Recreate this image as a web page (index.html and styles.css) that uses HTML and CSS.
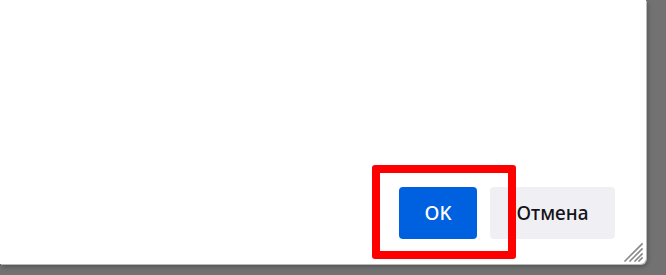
FILE: index.html
```html
<!DOCTYPE html>
<html lang="ru">
<head>
<meta charset="utf-8">
<title>Dialog</title>
<link rel="stylesheet" href="styles.css">
</head>
<body>
<div class="dialog">
  <div class="dialog-body"></div>
  <div class="dialog-footer">
    <div class="highlight-wrap">
      <button class="btn btn-primary">OK</button>
      <span class="highlight"></span>
    </div>
    <button class="btn btn-secondary">Отмена</button>
  </div>
  <svg class="grip" width="20" height="20" viewBox="0 0 20 20">
    <g stroke="#8a8a8a" stroke-width="1.6" stroke-linecap="square">
      <line x1="2" y1="19" x2="19" y2="2"/>
      <line x1="7" y1="19" x2="19" y2="7"/>
      <line x1="12" y1="19" x2="19" y2="12"/>
      <line x1="16" y1="19" x2="19" y2="16"/>
    </g>
  </svg>
</div>
</body>
</html>
```
FILE: styles.css
```css
html, body {
  margin: 0;
  padding: 0;
}
body {
  width: 666px;
  height: 275px;
  background: #727272;
  font-family: "Noto Sans", "Open Sans", sans-serif;
  overflow: hidden;
}
.dialog {
  position: relative;
  width: 646px;
  height: 264px;
  background: #ffffff;
  border-bottom-right-radius: 6px;
  box-shadow: 1px 1px 0 #b9b9b9, 2px 3px 4px rgba(0,0,0,0.25);
  display: flex;
  flex-direction: column;
}
.dialog-body {
  flex: 1;
}
.dialog-footer {
  display: flex;
  justify-content: flex-end;
  gap: 13px;
  padding: 0 31px 25px 0;
}
.highlight-wrap {
  position: relative;
  display: flex;
}
.btn {
  height: 52px;
  border: none;
  border-radius: 4px;
  font-family: "Noto Sans", "Open Sans", sans-serif;
  font-size: 19px;
  font-weight: 500;
  padding: 0;
  line-height: 52px;
}
.btn-primary {
  width: 78px;
  background: #0061e0;
  color: #ffffff;
}
.btn-secondary {
  width: 125px;
  background: #f0f0f4;
  color: #15141a;
}
.highlight {
  position: absolute;
  left: -27px;
  top: -22px;
  width: 128px;
  height: 78px;
  border: 8px solid #ff0000;
  border-radius: 3px;
  z-index: 2;
}
.grip {
  position: absolute;
  right: 3px;
  bottom: 2px;
}
```
